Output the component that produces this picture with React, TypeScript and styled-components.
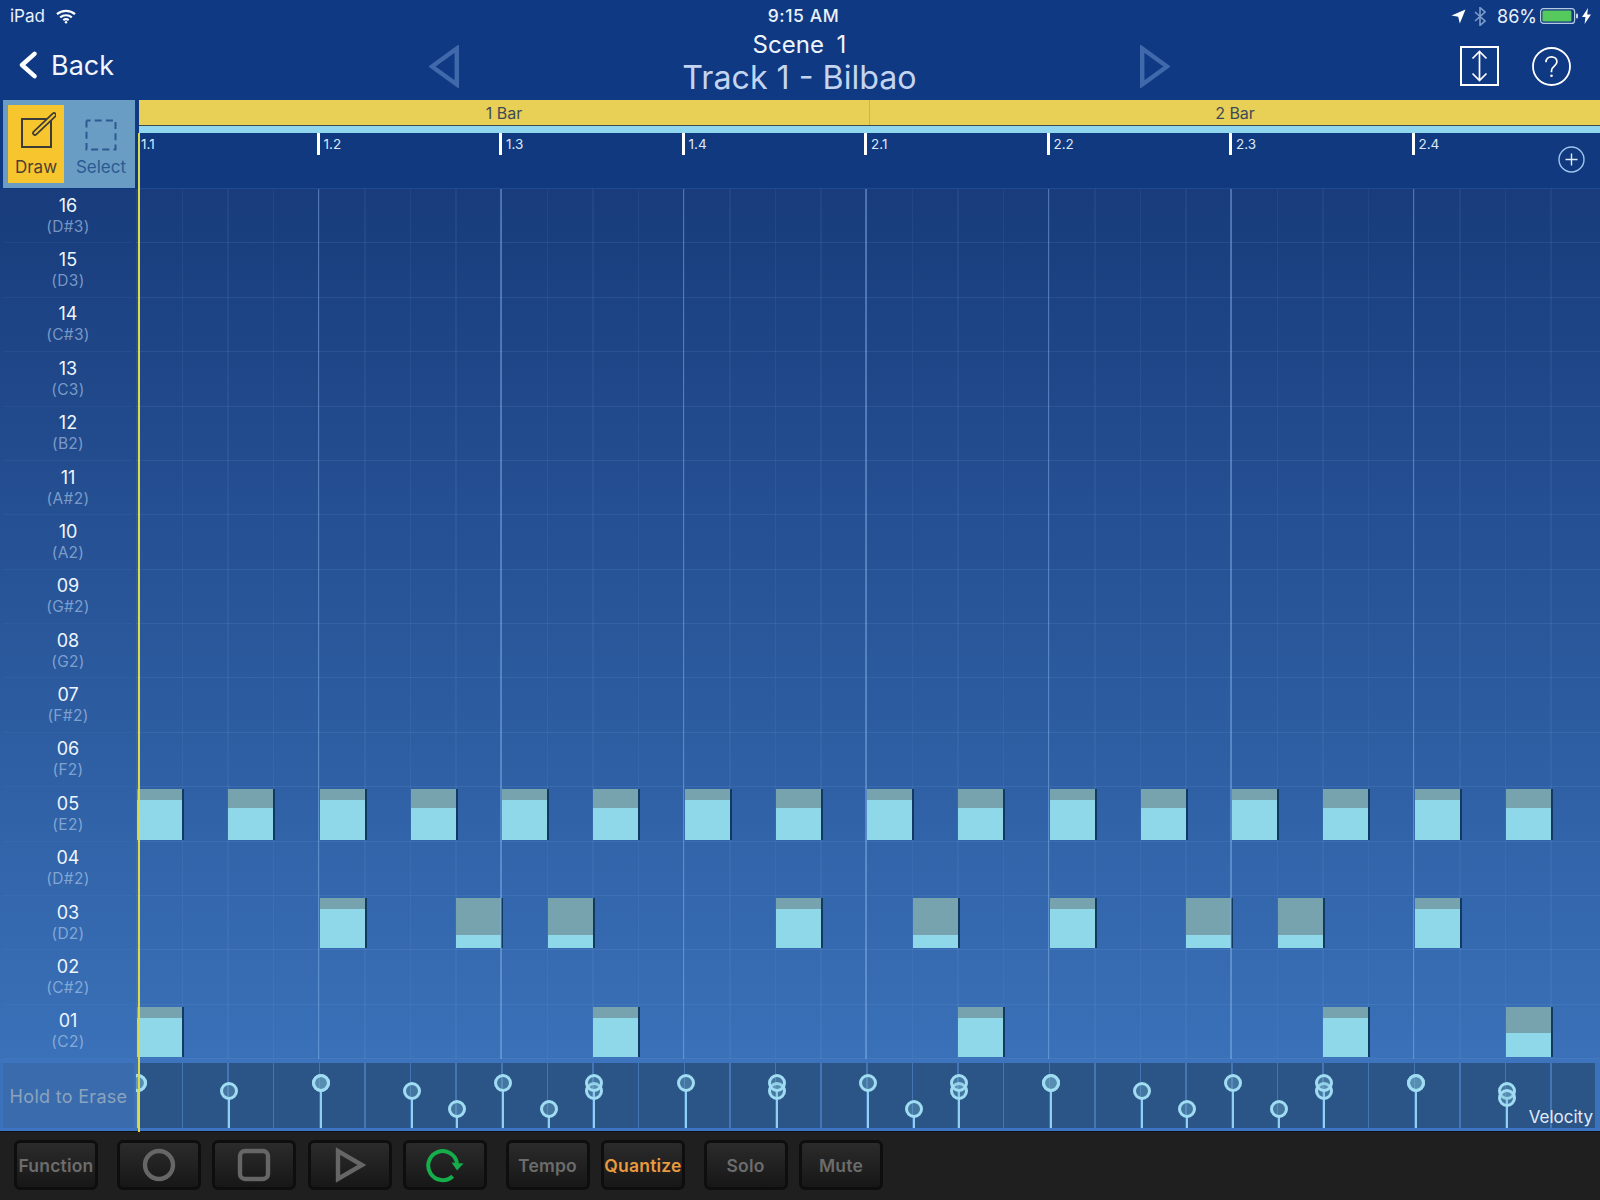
import React from "react";
import styled, { createGlobalStyle } from "styled-components";

const FONT = `Inter, "Noto Sans", "Liberation Sans", sans-serif`;
const SLOT = 45.625;
const BEAT = 182.5;

const Global = createGlobalStyle`
  html, body { margin: 0; padding: 0; background: #0f3983; }
  #root { width: 1600px; height: 1200px; overflow: hidden; }
  * { box-sizing: border-box; }
`;

const Page = styled.div`
  position: relative;
  width: 1600px;
  height: 1200px;
  display: flex;
  flex-direction: column;
  overflow: hidden;
  font-family: ${FONT};
  background: #0f3983;
  color: #fff;
`;

/* ---------- status bar ---------- */
const StatusBar = styled.div`
  height: 32px;
  padding: 0 9px 0 10px;
  display: grid;
  grid-template-columns: 1fr auto 1fr;
  align-items: center;
  font-size: 17px;
  color: #eaf1fb;
`;
const StatusLeft = styled.div`
  display: flex;
  align-items: center;
  gap: 11px;
`;
const StatusTime = styled.div`
  font-weight: 500;
  font-size: 17.5px;
  letter-spacing: 0.6px;
  padding: 0 0 1px 6px;
`;
const StatusRight = styled.div`
  display: flex;
  align-items: center;
  justify-content: flex-end;
  gap: 8px;
`;
const Percent = styled.span`
  font-size: 18px;
  margin: 0 -5px 0 3px;
`;
const BatteryGroup = styled.div`
  display: flex;
  align-items: center;
  gap: 3px;
`;

/* ---------- navigation ---------- */
const NavBar = styled.div`
  height: 68px;
  padding: 0 29px 0 18px;
  display: grid;
  grid-template-columns: 1fr auto 1fr;
  grid-template-rows: 68px;
  align-items: center;
`;
const BackLink = styled.div`
  display: flex;
  align-items: center;
  gap: 13px;
  font-size: 27px;
  padding-bottom: 2px;
  color: #f2f6fc;
`;
const NavCenter = styled.div`
  display: flex;
  align-items: center;
  padding-left: 10px;
`;
const TitleBlock = styled.div`
  width: 681px;
  display: flex;
  flex-direction: column;
  align-items: center;
  padding-bottom: 8px;
`;
const SceneTitle = styled.div`
  font-size: 24px;
  line-height: 30px;
  word-spacing: 6px;
  color: #eef4fc;
`;
const TrackTitle = styled.div`
  font-size: 32.2px;
  line-height: 35px;
  color: #c3d5f0;
`;
const NavRight = styled.div`
  display: flex;
  justify-content: flex-end;
  align-items: center;
  gap: 33px;
`;

/* ---------- top row: tools + timeline ---------- */
const TopRow = styled.div`
  height: 89px;
  display: flex;
`;
const ToolPanel = styled.div`
  width: 132px;
  margin: 0 4px 1px 3px;
  padding: 5px 0 5px 5px;
  background: #6a9dc4;
  display: flex;
`;
const ToolButton = styled.div<{ $active?: boolean }>`
  width: ${(p) => (p.$active ? 56 : 68)}px;
  padding: 7px 0 0 ${(p) => (p.$active ? 0 : 6)}px;
  background: ${(p) => (p.$active ? "#f7c62f" : "transparent")};
  color: ${(p) => (p.$active ? "#4c4030" : "#2b5a92")};
  display: flex;
  flex-direction: column;
  align-items: center;
  font-size: 17px;
  gap: 9px;
  line-height: 20px;
`;
const ToolIcon = styled.div<{ $inset?: number }>`
  height: 36px;
  padding-top: ${(p) => p.$inset ?? 0}px;
  line-height: 0;
`;
const Timeline = styled.div`
  flex: 1;
  min-width: 0;
  display: flex;
  flex-direction: column;
`;
const BarStrip = styled.div`
  height: 26px;
  display: grid;
  grid-template-columns: 730px 1fr;
  background: #e8cf55;
  border-bottom: 1px solid #3a4a50;
`;
const BarCell = styled.div<{ $divided?: boolean }>`
  display: flex;
  align-items: center;
  justify-content: center;
  font-size: 16px;
  color: #3c4a58;
  border-left: ${(p) => (p.$divided ? "1px solid #cdb54e" : "none")};
`;
const CursorStrip = styled.div`
  height: 7px;
  background: #8fd6ee;
`;
const RulerBand = styled.div`
  position: relative;
  flex: 1;
  background: #11397f;
  border-bottom: 1px solid #1f4a90;
`;
const Ruler = styled.div`
  margin-left: -4px;
  display: grid;
  grid-template-columns: repeat(8, ${BEAT}px);
`;
const RulerCell = styled.div`
  height: 22px;
  display: flex;
  gap: 4px;
  font-size: 13.5px;
  color: #dce8f8;
`;
const Tick = styled.span<{ $hidden?: boolean }>`
  width: 3px;
  height: 22px;
  margin-left: -1px;
  background: ${(p) => (p.$hidden ? "transparent" : "#fff")};
`;
const RulerLabel = styled.span`
  line-height: 18px;
  padding-top: 2px;
`;
const AddButton = styled.div`
  position: absolute;
  right: 15px;
  top: 13px;
  line-height: 0;
`;

/* ---------- piano roll ---------- */
const RollArea = styled.div`
  height: 870px;
  display: flex;
  background: linear-gradient(#183c7c, #3a71b8);
`;
const KeyColumn = styled.div`
  width: 136px;
  flex: none;
  padding-left: 3px;
  display: grid;
  grid-template-rows: repeat(16, 1fr);
`;
const KeyCell = styled.div`
  width: 130px;
  display: flex;
  flex-direction: column;
  align-items: center;
  justify-content: center;
  padding-bottom: 1px;
  border-bottom: 1px solid rgba(130, 175, 230, 0.07);
`;
const KeyNumber = styled.div`
  font-size: 18px;
  line-height: 22px;
  color: #eef5fd;
`;
const KeyNote = styled.div`
  font-size: 15.5px;
  line-height: 19px;
  letter-spacing: 0.3px;
  color: rgba(190, 215, 245, 0.58);
`;
const Canvas = styled.div`
  position: relative;
  flex: 1;
  display: grid;
  grid-template-rows: repeat(16, 1fr);
  background-image: repeating-linear-gradient(
    90deg,
    rgba(140, 185, 240, 0.08) 0 1.5px,
    transparent 1.5px ${SLOT}px
  );
  background-size: 1460px 100%;
  background-repeat: no-repeat;
`;
const Lane = styled.div`
  position: relative;
  border-bottom: 1px solid rgba(140, 185, 240, 0.12);
`;
const BeatLine = styled.div`
  position: absolute;
  top: 0;
  bottom: 0;
  width: 1.5px;
  margin-left: -1px;
  background: rgba(140, 185, 240, 0.42);
`;
const Note = styled.div`
  position: absolute;
  top: 2px;
  height: 50.5px;
  width: 47px;
  display: flex;
  flex-direction: column;
  border-right: 2px solid #12395f;
`;
const NoteTop = styled.div`
  background: #76a3ad;
  flex: none;
`;
const NoteBody = styled.div`
  flex: 1;
  background: #8fd8ea;
`;

/* ---------- velocity ---------- */
const Separator = styled.div`
  height: 4px;
  background: #3e74bd;
`;
const VelocityRow = styled.div`
  height: 65px;
  display: flex;
  background: #3b72bc;
`;
const EraseLabel = styled.div`
  width: 131px;
  margin-left: 3px;
  margin-right: 2px;
  padding-top: 1px;
  background: #3a6cad;
  display: flex;
  align-items: center;
  justify-content: center;
  font-size: 18px;
  letter-spacing: 0.3px;
  color: #8ba3bd;
`;
const VelocityLane = styled.div`
  position: relative;
  width: 1459px;
  overflow: hidden;
  background-color: #2b5487;
  background-image: repeating-linear-gradient(
    90deg,
    #4576b4 0 1.5px,
    transparent 1.5px ${SLOT}px
  );
`;
const Stem = styled.div`
  position: absolute;
  bottom: 0;
  width: 2px;
  background: #8fd0f2;
`;
const Handle = styled.div`
  position: absolute;
  width: 18px;
  height: 18px;
  border-radius: 50%;
  border: 3px solid #a0dcf2;
  background: rgba(125, 190, 210, 0.32);
`;
const VelocityLabel = styled.div`
  position: absolute;
  right: 2px;
  bottom: 1px;
  font-size: 17px;
  line-height: 20px;
  color: #e0ecfa;
`;
const BottomEdge = styled.div`
  height: 3px;
  background: #3e74c4;
`;

/* ---------- toolbar ---------- */
const Toolbar = styled.div`
  flex: 1;
  background: #1f1f1f;
  border-top: 1px solid #121212;
  padding: 8px 0 0 14px;
  display: flex;
  gap: 18.5px;
`;
const ToolbarGroup = styled.div`
  display: flex;
  gap: 11.5px;
`;
const TransportButton = styled.div<{ $lit?: boolean }>`
  width: 84px;
  height: 50px;
  border: 3px solid #0e0e0e;
  border-radius: 6px;
  background: linear-gradient(#2b2b2b, #171717);
  display: flex;
  align-items: center;
  justify-content: center;
  font-size: 17.5px;
  font-weight: 600;
  letter-spacing: 0.2px;
  color: ${(p) => (p.$lit ? "#ea9a3e" : "#6c6c6c")};
`;

const Playhead = styled.div`
  position: absolute;
  left: 138px;
  top: 133px;
  width: 2px;
  height: 999px;
  background: #dcd94a;
`;

/* ---------- data ---------- */
const keys: [string, string][] = [
  ["16", "(D#3)"], ["15", "(D3)"], ["14", "(C#3)"], ["13", "(C3)"],
  ["12", "(B2)"], ["11", "(A#2)"], ["10", "(A2)"], ["09", "(G#2)"],
  ["08", "(G2)"], ["07", "(F#2)"], ["06", "(F2)"], ["05", "(E2)"],
  ["04", "(D#2)"], ["03", "(D2)"], ["02", "(C#2)"], ["01", "(C2)"],
];
const beats = ["1.1", "1.2", "1.3", "1.4", "2.1", "2.2", "2.3", "2.4"];

const HI = 20, MID = 28, LOW = 46, SOFT = 35;
const kick: [number, number][] = Array.from({ length: 16 }, (_, i) => [i * 2, i % 2 ? MID : HI]);
const notesByRow: Record<number, [number, number][]> = {
  11: kick,
  13: [[4, HI], [7, LOW], [9, LOW], [14, HI], [17, LOW], [20, HI], [23, LOW], [25, LOW], [28, HI]],
  15: [[0, HI], [10, HI], [18, HI], [26, HI], [30, SOFT]],
};
const allNotes = Object.values(notesByRow).flat();

/* ---------- icons ---------- */
const Wifi = () => (
  <svg width="20" height="15" viewBox="0 0 20 15" fill="none" stroke="#fff" strokeWidth="2.2">
    <path d="M1 5.2C6 .8 14 .8 19 5.2" />
    <path d="M4.2 8.4c3.4-2.9 8.2-2.9 11.6 0" />
    <path d="M7.3 11.2c1.7-1.3 3.7-1.3 5.4 0" />
    <circle cx="10" cy="13.2" r="1.2" fill="#fff" stroke="none" />
  </svg>
);
const LocationArrow = () => (
  <svg width="15" height="15" viewBox="0 0 15 15"><path d="M14.5 .5 8.8 14.5 7.2 7.8 .5 6.4z" fill="#fff" /></svg>
);
const Bluetooth = () => (
  <svg width="12" height="19" viewBox="0 0 12 19" fill="none" stroke="#7d9bcb" strokeWidth="1.6">
    <path d="M1 5l10 9-5 4.4V.6l5 4.4L1 14" />
  </svg>
);
const Battery = () => (
  <svg width="39" height="18" viewBox="0 0 39 18">
    <rect x=".6" y="1.6" width="34" height="14.8" rx="3" fill="none" stroke="#b7c9e4" strokeWidth="1.2" />
    <rect x="2.4" y="3.4" width="29" height="11.2" rx="1.4" fill="#55c95e" />
    <rect x="36" y="6.6" width="2" height="5" rx="1" fill="#c9d7ec" />
  </svg>
);
const Bolt = () => (
  <svg width="9" height="16" viewBox="0 0 9 16"><path d="M6 0 0 9h3.4L2.6 16 9 6.4H5.2z" fill="#fff" /></svg>
);
const Chevron = () => (
  <svg width="20" height="28" viewBox="0 0 20 28" fill="none" stroke="#fff" strokeWidth="4.4" strokeLinecap="round" strokeLinejoin="round">
    <path d="M16.5 2.8 4 14l12.5 11.2" />
  </svg>
);
const Triangle = ({ right }: { right?: boolean }) => (
  <svg width="30" height="43" viewBox="0 0 30 43" fill="none" stroke="#4069ac" strokeWidth="4.4" strokeLinejoin="miter">
    <path d={right ? "M2.2 3.5v36L27 21.5z" : "M27.8 3.5v36L3 21.5z"} />
  </svg>
);
const ExpandIcon = () => (
  <svg width="39" height="40" viewBox="0 0 39 40" fill="none" stroke="#fff" strokeWidth="1.7">
    <rect x="1" y="1" width="37" height="38" strokeWidth="2" />
    <path d="M19.5 6v28M12.5 12.5l7-7 7 7M12.5 27.5l7 7 7-7" />
  </svg>
);
const HelpIcon = () => (
  <svg width="39" height="39" viewBox="0 0 39 39" fill="none" stroke="#fff">
    <circle cx="19.5" cy="19.5" r="18.5" strokeWidth="1.8" />
    <path d="M14 15.2c0-3.4 2.4-5.4 5.5-5.4s5.4 2.1 5.4 4.9c0 4.4-5.4 4.4-5.4 9v1.6" strokeWidth="1.7" />
    <circle cx="19.5" cy="28.8" r="1.3" fill="#fff" stroke="none" />
  </svg>
);
const DrawIcon = () => (
  <svg width="40" height="36" viewBox="0 0 40 36" fill="none">
    <rect x="6" y="7" width="29" height="28" stroke="#3d3b38" strokeWidth="2" />
    <path d="M19 21 38 3" stroke="#3d3b38" strokeWidth="5.6" strokeLinecap="round" />
    <path d="M19 21 38 3" stroke="#f7c62f" strokeWidth="2.2" strokeLinecap="round" />
  </svg>
);
const SelectIcon = () => (
  <svg width="32" height="32" viewBox="0 0 32 32" fill="none" stroke="#2b5a92" strokeWidth="2">
    <rect x="1.5" y="1.5" width="29" height="29" strokeDasharray="7 4.2" strokeDashoffset="3" />
  </svg>
);
const PlusCircle = () => (
  <svg width="27" height="27" viewBox="0 0 27 27" fill="none" stroke="#9cc6ee" strokeWidth="1.4">
    <circle cx="13.5" cy="13.5" r="12.5" />
    <path d="M13.5 7.5v12M7.5 13.5h12" stroke="#dcebfa" />
  </svg>
);
const RecordIcon = () => (
  <svg width="36" height="36" viewBox="0 0 36 36" fill="none" stroke="#666" strokeWidth="4.4">
    <circle cx="18" cy="18" r="14" />
  </svg>
);
const StopIcon = () => (
  <svg width="36" height="36" viewBox="0 0 36 36" fill="none" stroke="#666" strokeWidth="4.4">
    <rect x="4" y="4" width="28" height="28" rx="5" />
  </svg>
);
const PlayIcon = () => (
  <svg width="36" height="36" viewBox="0 0 36 36" fill="none" stroke="#666" strokeWidth="4.4">
    <path d="M6 4v28l24-14z" />
  </svg>
);
const LoopIcon = () => (
  <svg width="40" height="38" viewBox="0 0 40 38" fill="none" stroke="#16ad4b" strokeWidth="4">
    <path d="M27.7 30.2A14.5 14.5 0 1 1 32 17" />
    <path d="M26.5 16.5 38.5 17.5 32 24.5z" fill="#16ad4b" stroke="none" />
  </svg>
);

export default function App() {
  return (
    <Page>
      <Global />
      <StatusBar>
        <StatusLeft>
          <span>iPad</span>
          <Wifi />
        </StatusLeft>
        <StatusTime>9:15 AM</StatusTime>
        <StatusRight>
          <LocationArrow />
          <Bluetooth />
          <Percent>86%</Percent>
          <BatteryGroup>
            <Battery />
            <Bolt />
          </BatteryGroup>
        </StatusRight>
      </StatusBar>

      <NavBar>
        <BackLink>
          <Chevron />
          <span>Back</span>
        </BackLink>
        <NavCenter>
          <Triangle />
          <TitleBlock>
            <SceneTitle>Scene 1</SceneTitle>
            <TrackTitle>Track 1 - Bilbao</TrackTitle>
          </TitleBlock>
          <Triangle right />
        </NavCenter>
        <NavRight>
          <ExpandIcon />
          <HelpIcon />
        </NavRight>
      </NavBar>

      <TopRow>
        <ToolPanel>
          <ToolButton $active>
            <ToolIcon><DrawIcon /></ToolIcon>
            <span>Draw</span>
          </ToolButton>
          <ToolButton>
            <ToolIcon $inset={7}><SelectIcon /></ToolIcon>
            <span>Select</span>
          </ToolButton>
        </ToolPanel>
        <Timeline>
          <BarStrip>
            <BarCell>1 Bar</BarCell>
            <BarCell $divided>2 Bar</BarCell>
          </BarStrip>
          <CursorStrip />
          <RulerBand>
            <Ruler>
              {beats.map((b, i) => (
                <RulerCell key={b}>
                  <Tick $hidden={i === 0} />
                  <RulerLabel>{b}</RulerLabel>
                </RulerCell>
              ))}
            </Ruler>
            <AddButton>
              <PlusCircle />
            </AddButton>
          </RulerBand>
        </Timeline>
      </TopRow>

      <RollArea>
        <KeyColumn>
          {keys.map(([n, k]) => (
            <KeyCell key={n}>
              <KeyNumber>{n}</KeyNumber>
              <KeyNote>{k}</KeyNote>
            </KeyCell>
          ))}
        </KeyColumn>
        <Canvas>
          {keys.map(([n], row) => (
            <Lane key={n}>
              {(notesByRow[row] ?? []).map(([slot, y]) => (
                <Note key={slot} style={{ left: slot * SLOT + 1 }}>
                  <NoteTop style={{ height: y - 9 }} />
                  <NoteBody />
                </Note>
              ))}
            </Lane>
          ))}
          {beats.slice(1).map((b, i) => (
            <BeatLine key={b} style={{ left: (i + 1) * BEAT }} />
          ))}
        </Canvas>
      </RollArea>

      <Separator />

      <VelocityRow>
        <EraseLabel>Hold to Erase</EraseLabel>
        <VelocityLane>
          {allNotes.map(([slot, y]) => (
            <Stem key={`s${slot}-${y}`} style={{ left: slot * SLOT + 1, height: 65 - y - 8 }} />
          ))}
          {allNotes.map(([slot, y]) => (
            <Handle key={`h${slot}-${y}`} style={{ left: slot * SLOT - 7, top: y - 9 }} />
          ))}
          <VelocityLabel>Velocity</VelocityLabel>
        </VelocityLane>
      </VelocityRow>
      <BottomEdge />

      <Toolbar>
        <ToolbarGroup>
          <TransportButton>Function</TransportButton>
        </ToolbarGroup>
        <ToolbarGroup>
          <TransportButton><RecordIcon /></TransportButton>
          <TransportButton><StopIcon /></TransportButton>
          <TransportButton><PlayIcon /></TransportButton>
          <TransportButton><LoopIcon /></TransportButton>
        </ToolbarGroup>
        <ToolbarGroup>
          <TransportButton>Tempo</TransportButton>
          <TransportButton $lit>Quantize</TransportButton>
        </ToolbarGroup>
        <ToolbarGroup>
          <TransportButton>Solo</TransportButton>
          <TransportButton>Mute</TransportButton>
        </ToolbarGroup>
      </Toolbar>
      <Playhead />
    </Page>
  );
}
